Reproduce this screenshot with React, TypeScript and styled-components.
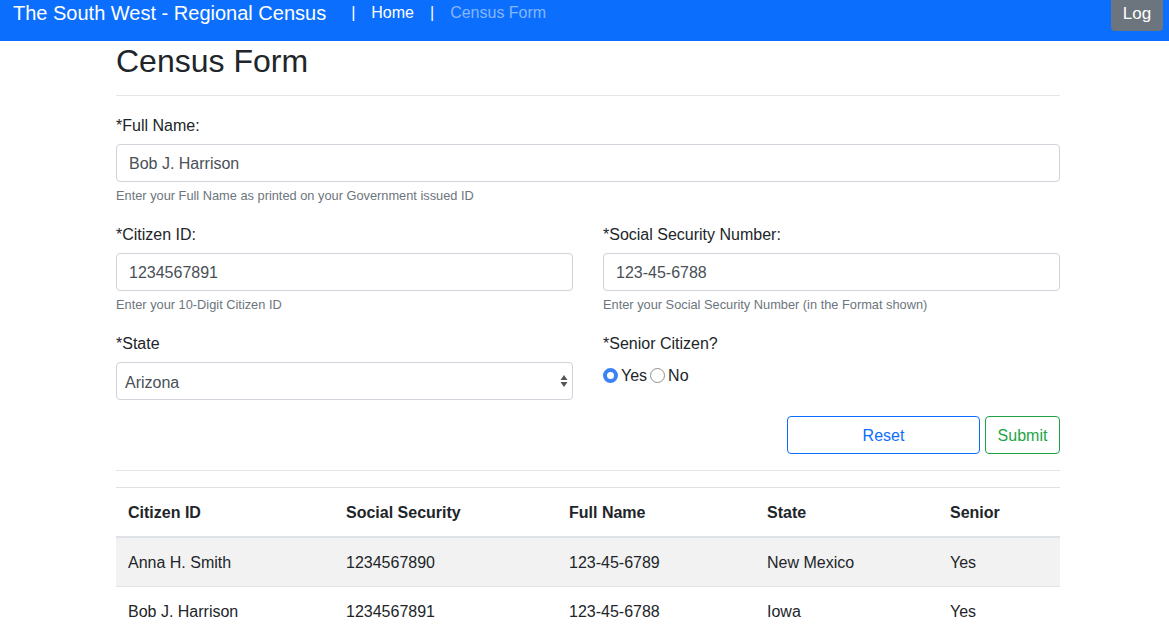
import React from 'react'
import styled, { createGlobalStyle } from 'styled-components'

const GlobalStyle = createGlobalStyle`
  body {
    margin: 0;
    font-family: 'Liberation Sans', Arial, sans-serif;
    color: #212529;
    background: #fff;
  }
  * { box-sizing: border-box; }
`

const Navbar = styled.nav`
  height: 41px;
  background: #0b6efd;
  display: flex;
  align-items: flex-start;
  padding: 0 6px 0 13px;
  color: #fff;
`

const Brand = styled.span`
  font-size: 20px;
  line-height: 26px;
  margin-right: 25px;
`

const NavSep = styled.span`
  font-size: 16px;
  line-height: 26px;
  padding: 0 16px 0 0;
`

const NavLink = styled.span<{ active?: boolean }>`
  font-size: 16px;
  line-height: 26px;
  margin-right: 16px;
  color: ${(p) => (p.active ? '#fff' : 'rgba(255,255,255,0.5)')};
`

const LogButton = styled.button`
  margin-left: auto;
  width: 52px;
  height: 31px;
  border: none;
  border-radius: 0 0 4px 4px;
  background: #6c757d;
  color: #fff;
  font-family: inherit;
  font-size: 17px;
  padding: 0 0 4px;
`

const Container = styled.main`
  width: 944px;
  margin-left: 116px;
`

const Title = styled.h1`
  margin: 0;
  padding-top: 1px;
  height: 38px;
  font-size: 32px;
  font-weight: 500;
  line-height: 38px;
`

const Rule = styled.hr<{ flush?: boolean }>`
  border: 0;
  border-top: 1px solid rgba(0, 0, 0, 0.1);
  margin: ${(p) => (p.flush ? '0' : '16px 0')};
`

const Row = styled.div`
  display: grid;
  grid-template-columns: 1fr 1fr;
  column-gap: 30px;
`

const Group = styled.div`
  margin-bottom: 16px;
`

const Label = styled.label`
  display: block;
  font-size: 16px;
  line-height: 24px;
  padding-top: 2px;
  margin-bottom: 6px;
`

const Input = styled.input`
  display: block;
  width: 100%;
  height: 38px;
  padding: 7px 12px 5px;
  font-family: inherit;
  font-size: 16px;
  color: #495057;
  border: 1px solid #ced4da;
  border-radius: 4px;
  background: #fff;
  outline: none;
`

const Help = styled.small`
  display: block;
  margin-top: 4px;
  font-size: 12.8px;
  line-height: 19px;
  color: #6c757d;
`

const SelectWrap = styled.div`
  position: relative;
`

const Select = styled.select`
  display: block;
  width: 100%;
  height: 38px;
  padding: 7px 8px 5px;
  font-family: inherit;
  font-size: 16px;
  color: #495057;
  border: 1px solid #ced4da;
  border-radius: 4px;
  background: #fff;
  appearance: none;
  outline: none;
`

const Arrows = styled.svg`
  position: absolute;
  right: 5px;
  top: 12px;
  pointer-events: none;
`

const Radios = styled.div`
  display: flex;
  align-items: center;
  height: 26px;
  padding-top: 1px;
`

const RadioLabel = styled.label`
  display: flex;
  align-items: center;
  font-size: 16px;
  line-height: 24px;
  margin-right: 3px;
`

const RadioDot = styled.span<{ checked?: boolean }>`
  width: 15px;
  height: 15px;
  border-radius: 50%;
  margin-right: 3px;
  background: #fff;
  border: ${(p) => (p.checked ? '4.5px solid #3b82f6' : '1px solid #8f8f8f')};
`

const Actions = styled.div`
  display: flex;
  justify-content: flex-end;
  gap: 5px;
  margin-bottom: 16px;
`

const OutlineButton = styled.button<{ tone: string; wide?: boolean }>`
  height: 38px;
  width: ${(p) => (p.wide ? '193px' : '75px')};
  padding-top: 2px;
  font-family: inherit;
  font-size: 16px;
  color: ${(p) => p.tone};
  border: 1px solid ${(p) => p.tone};
  border-radius: 4px;
  background: #fff;
`

const Table = styled.table`
  width: 100%;
  border-collapse: collapse;
  font-size: 16px;
  margin-top: 16px;
`

const Th = styled.th<{ w: number }>`
  width: ${(p) => p.w}px;
  text-align: left;
  font-weight: 700;
  padding: 13px 12px 11px;
  line-height: 24px;
  border-top: 1px solid #dee2e6;
  border-bottom: 2px solid #dee2e6;
`

const Tr = styled.tr<{ striped?: boolean }>`
  background: ${(p) => (p.striped ? '#f2f2f2' : '#fff')};
`

const Td = styled.td`
  padding: 13px 12px 11px;
  line-height: 24px;
  border-top: 1px solid #dee2e6;
`

const columns = [
  { title: 'Citizen ID', w: 218 },
  { title: 'Social Security', w: 223 },
  { title: 'Full Name', w: 198 },
  { title: 'State', w: 183 },
  { title: 'Senior', w: 122 },
]

const rows = [
  ['Anna H. Smith', '1234567890', '123-45-6789', 'New Mexico', 'Yes'],
  ['Bob J. Harrison', '1234567891', '123-45-6788', 'Iowa', 'Yes'],
]

export default function App() {
  return (
    <>
      <GlobalStyle />
      <Navbar>
        <Brand>The South West - Regional Census</Brand>
        <NavSep>|</NavSep>
        <NavLink active>Home</NavLink>
        <NavSep>|</NavSep>
        <NavLink>Census Form</NavLink>
        <LogButton>Log</LogButton>
      </Navbar>
      <Container>
        <Title>Census Form</Title>
        <Rule />
        <Group>
          <Label>*Full Name:</Label>
          <Input defaultValue="Bob J. Harrison" />
          <Help>Enter your Full Name as printed on your Government issued ID</Help>
        </Group>
        <Row>
          <Group>
            <Label>*Citizen ID:</Label>
            <Input defaultValue="1234567891" />
            <Help>Enter your 10-Digit Citizen ID</Help>
          </Group>
          <Group>
            <Label>*Social Security Number:</Label>
            <Input defaultValue="123-45-6788" />
            <Help>Enter your Social Security Number (in the Format shown)</Help>
          </Group>
        </Row>
        <Row>
          <Group>
            <Label>*State</Label>
            <SelectWrap>
              <Select defaultValue="Arizona">
                <option>Arizona</option>
                <option>New Mexico</option>
                <option>Iowa</option>
              </Select>
              <Arrows width="8" height="14" viewBox="0 0 8 14">
                <path d="M4 1 L7.5 6 L0.5 6 Z" fill="#555" />
                <path d="M4 13 L7.5 8 L0.5 8 Z" fill="#555" />
              </Arrows>
            </SelectWrap>
          </Group>
          <Group>
            <Label>*Senior Citizen?</Label>
            <Radios>
              <RadioLabel>
                <RadioDot checked />
                Yes
              </RadioLabel>
              <RadioLabel>
                <RadioDot />
                No
              </RadioLabel>
            </Radios>
          </Group>
        </Row>
        <Actions>
          <OutlineButton tone="#0d6efd" wide>
            Reset
          </OutlineButton>
          <OutlineButton tone="#1ea446">Submit</OutlineButton>
        </Actions>
        <Rule flush />
        <Table>
          <thead>
            <tr>
              {columns.map((c) => (
                <Th key={c.title} w={c.w}>
                  {c.title}
                </Th>
              ))}
            </tr>
          </thead>
          <tbody>
            {rows.map((r, i) => (
              <Tr key={i} striped={i % 2 === 0}>
                {r.map((cell, j) => (
                  <Td key={j}>{cell}</Td>
                ))}
              </Tr>
            ))}
          </tbody>
        </Table>
      </Container>
    </>
  )
}
